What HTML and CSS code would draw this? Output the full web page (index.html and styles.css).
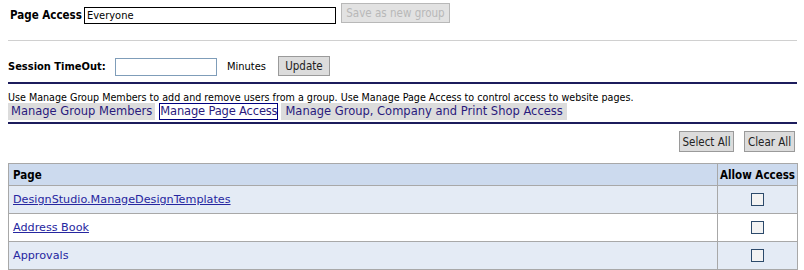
FILE: index.html
```html
<!DOCTYPE html>
<html>
<head>
<meta charset="utf-8">
<link rel="stylesheet" href="styles.css">
</head>
<body>
<div class="page">
  <div class="row-access">
    <span class="lbl">Page Access</span>
    <input class="txt-group" type="text" value="Everyone">
    <button class="btn btn-disabled" disabled>Save as new group</button>
  </div>
  <div class="sep-light"></div>
  <div class="row-timeout">
    <span class="lbl">Session TimeOut:</span>
    <input class="txt-timeout" type="text" value="">
    <span class="minutes">Minutes</span>
    <button class="btn btn-update">Update</button>
  </div>
  <div class="sep-dark"></div>
  <p class="help">Use Manage Group Members to add and remove users from a group. Use Manage Page Access to control access to website pages.</p>
  <div class="tabs">
    <span class="tab tab-first">Manage Group Members</span>
    <span class="tab tab-active">Manage Page Access</span>
    <span class="tab tab-last">Manage Group, Company and Print Shop Access</span>
  </div>
  <div class="sep-dark sep-tabs"></div>
  <div class="actions">
    <button class="btn btn-act btn-sel">Select All</button>
    <button class="btn btn-act btn-clr">Clear All</button>
  </div>
  <table class="grid">
    <thead>
      <tr><th class="c-page">Page</th><th class="c-allow">Allow Access</th></tr>
    </thead>
    <tbody>
      <tr class="alt"><td><a href="#">DesignStudio.ManageDesignTemplates</a></td><td class="chk"><span class="box"></span></td></tr>
      <tr><td><a href="#">Address Book</a></td><td class="chk"><span class="box"></span></td></tr>
      <tr class="alt"><td><a href="#" class="nou">Approvals</a></td><td class="chk"><span class="box"></span></td></tr>
    </tbody>
  </table>
</div>
</body>
</html>
```
FILE: styles.css
```css
html, body { margin: 0; padding: 0; background: #fff; }
body { font-family: "DejaVu Sans Condensed", "DejaVu Sans", sans-serif; font-size: 11px; color: #000; }
.page { padding: 4px 7px 0 8px; }
.row-access { display: flex; align-items: center; height: 22px; }
.lbl { font-weight: bold; font-size: 11.5px; white-space: nowrap; }
.row-access .lbl { margin-left: 2px; width: 74px; }
.txt-group { box-sizing: border-box; width: 252px; height: 17px; border: 1px solid #000; padding: 0 2px; font-family: inherit; font-size: 11px; margin: 0 5px 0 0; outline: none; }
.btn { box-sizing: border-box; font-family: inherit; font-size: 11px; border: 1px solid #9a9a9a; background: #dcdcdc; color: #222; padding: 0; height: 20px; margin: 0; white-space: nowrap; }
.btn-disabled { color: #b8b8b8; background: #e2e2e2; border-color: #b8b8b8; width: 109px; margin-top: -4px; font-size: 11.5px; }
.sep-light { height: 1px; background: #d0d0d0; margin: 14px 0 0 0; }
.row-timeout { display: flex; align-items: center; height: 20px; margin-top: 15px; }
.row-timeout .lbl { width: 107px; font-size: 11px; }
.txt-timeout { box-sizing: border-box; width: 102px; height: 18px; border: 1px solid #7f9db9; margin: 1px 10px 0 0; padding: 0 2px; }
.minutes { margin-right: 12px; }
.btn-update { width: 52px; font-size: 11.5px; }
.sep-dark { height: 2px; background: #1c1c5c; margin-top: 6px; }
.help { margin: 8px 0 0 0; line-height: 11px; font-size: 10.65px; white-space: nowrap; }
.tabs { display: flex; height: 17px; align-items: stretch; margin-top: 0; }
.tab { font-family: "DejaVu Sans", sans-serif; font-size: 11.5px; color: #2a1a7c; background: #dcdcdc; padding: 0 4px; line-height: 17px; white-space: nowrap; }
.tab-first { padding: 0 3px; margin-right: 4px; }
.tab-active { background: #fff; border: 1px solid #000080; line-height: 15px; padding: 0; margin-right: 3px; letter-spacing: -0.17px; }
.sep-tabs { margin-top: 2px; }
.actions { display: flex; justify-content: flex-end; gap: 10px; padding: 7px 2px 0 0; }
.btn-act { height: 21px; font-size: 11.5px; }
.btn-sel { width: 55px; }
.btn-clr { width: 51px; }
.grid { width: 790px; border-collapse: collapse; margin-top: 11px; }
.grid th, .grid td { border: 1px solid #a8a8a8; }
.grid th { background: #ccdaee; text-align: left; font-weight: bold; font-size: 11.5px; height: 21px; padding: 0 4px; white-space: nowrap; }
.grid th.c-allow { width: 72px; text-align: center; padding: 0 2px; }
.grid td { height: 27px; padding: 0 4px; background: #fff; }
.grid tr.alt td { background: #e4ebf5; }
.grid a { font-family: "DejaVu Sans", sans-serif; font-size: 11.2px; color: #2626a0; }
.grid a.nou { text-decoration: none; }
.chk { text-align: center; }
.box { display: inline-block; width: 11px; height: 11px; border: 1px solid #2c4a6b; background: #f3f3f3; vertical-align: middle; }
```
